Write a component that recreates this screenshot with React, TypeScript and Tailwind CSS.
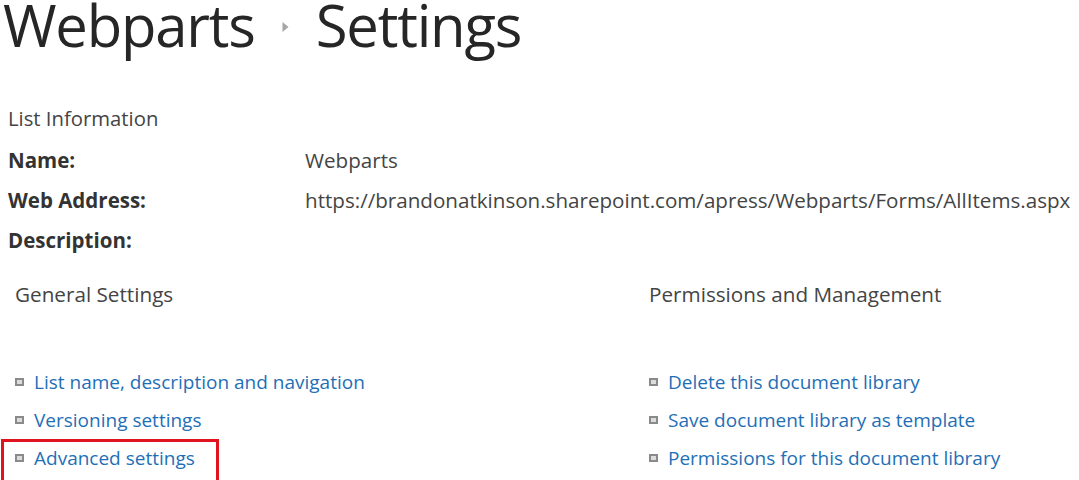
import React from "react";

const generalLinks = [
  { label: "List name, description and navigation", highlighted: false },
  { label: "Versioning settings", highlighted: false },
  { label: "Advanced settings", highlighted: true },
];

const permissionLinks = [
  "Delete this document library",
  "Save document library as template",
  "Permissions for this document library",
];

const fields = [
  { label: "Name:", value: "Webparts" },
  { label: "Web Address:", value: "https://brandonatkinson.sharepoint.com/apress/Webparts/Forms/AllItems.aspx" },
  { label: "Description:", value: "" },
];

export default function App() {
  return (
    <div
      className="h-[480px] w-[1079px] overflow-hidden bg-white text-[#444]"
      style={{ fontFamily: '"Open Sans", "Noto Sans", sans-serif' }}
    >
      <h1 className="-mt-[11px] flex items-center pl-[3px] text-[58px] font-normal leading-[72px] tracking-[-1.2px] text-[#262626]">
        <span>Webparts</span>
        <Breadcrumb />
        <span>Settings</span>
      </h1>

      <div className="pl-[8px] pt-[41px]">
        <p className="text-[20.3px] leading-[32px]">List Information</p>
        <div className="mt-[10px] grid grid-cols-[297px_1fr] gap-y-[8px] text-[20.6px] leading-[32px]">
          {fields.map((field) => (
            <React.Fragment key={field.label}>
              <span className="text-[20.5px] font-bold text-[#333]">{field.label}</span>
              <span className="whitespace-nowrap">{field.value}</span>
            </React.Fragment>
          ))}
        </div>
      </div>

      <div className="mt-[22px] grid grid-cols-[634px_1fr] pl-[15px]">
        <LinkColumn title="General Settings">
          {generalLinks.map((link) => (
            <SettingsLink key={link.label} label={link.label} highlighted={link.highlighted} />
          ))}
        </LinkColumn>
        <LinkColumn title="Permissions and Management">
          {permissionLinks.map((label) => (
            <SettingsLink key={label} label={label} />
          ))}
        </LinkColumn>
      </div>
    </div>
  );
}

function Breadcrumb() {
  return (
    <svg width="7" height="10" viewBox="0 0 7 10" className="ml-[27px] mr-[27px] mt-[4px]">
      <path d="M0.5 0 L6.5 5 L0.5 10 Z" fill="#a6a6a6" />
    </svg>
  );
}

function LinkColumn({ title, children }: { title: string; children: React.ReactNode }) {
  return (
    <div>
      <h2 className="text-[20.7px] font-normal leading-[32px] text-[#444]">{title}</h2>
      <ul className="mt-[56px] space-y-[6px]">{children}</ul>
    </div>
  );
}

function SettingsLink({ label, highlighted = false }: { label: string; highlighted?: boolean }) {
  return (
    <li className="relative flex items-center text-[19px] leading-[32px] text-[#1f6fb6]">
      {highlighted ? (
        <span className="pointer-events-none absolute -left-[14px] -top-[3px] h-[50px] w-[218px] border-[3px] border-[#e0141e]" />
      ) : null}
      <span className="mr-[10px] inline-block h-[8px] w-[9px] border-[2px] border-[#8a8a8a] bg-[#dcdcdc]" />
      <span>{label}</span>
    </li>
  );
}
